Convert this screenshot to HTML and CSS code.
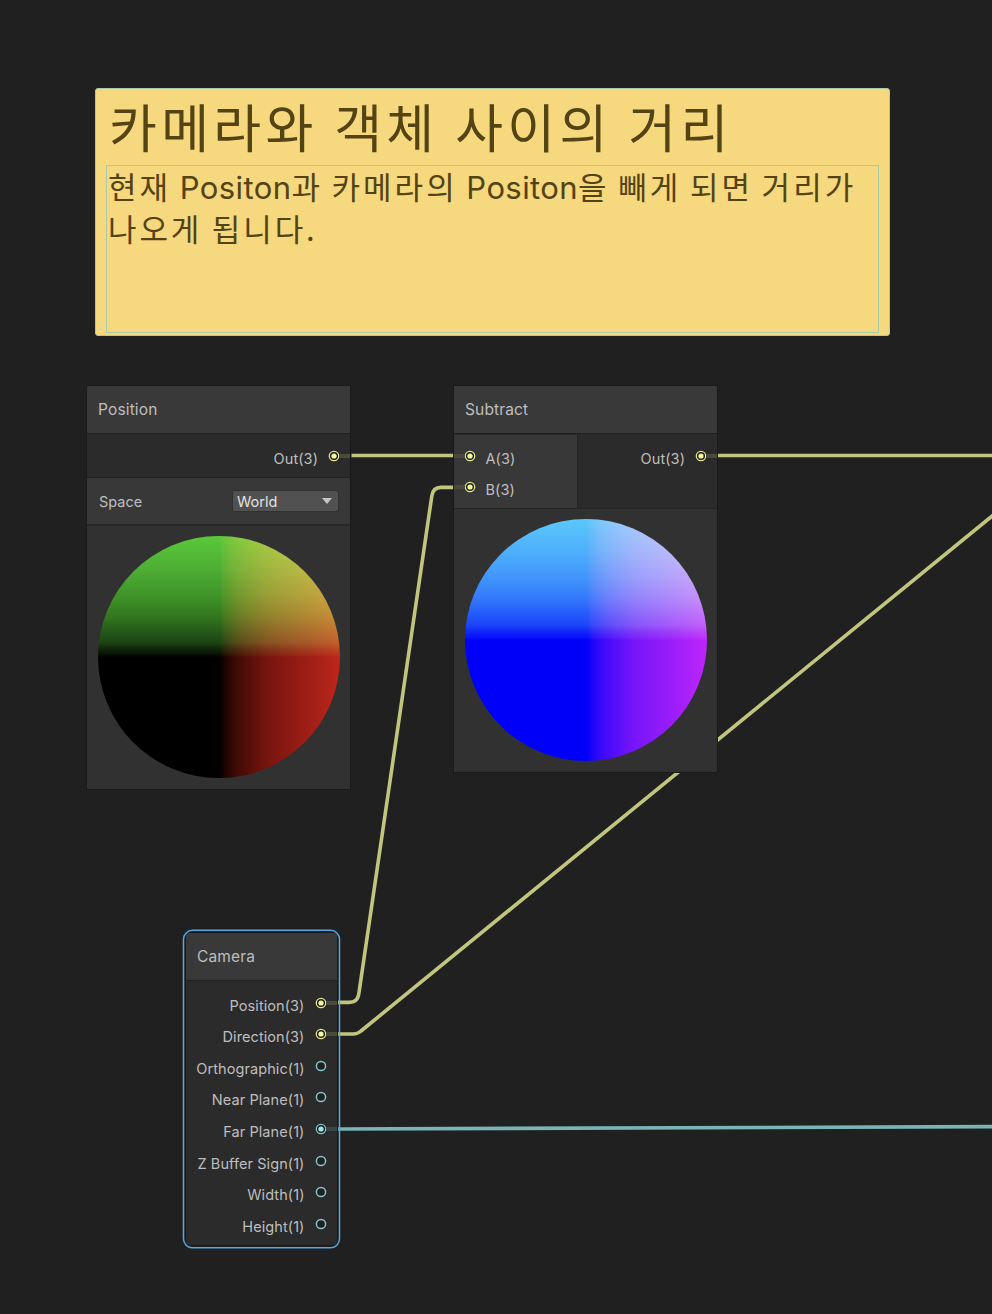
FILE: index.html
```
<!DOCTYPE html>
<html lang="ko">
<head>
<meta charset="utf-8">
<title>Shader Graph</title>
<link rel="stylesheet" href="styles.css">
</head>
<body>
<svg width="0" height="0" class="defs">
  <symbol id="ring" viewBox="0 0 12 12"><circle cx="6" cy="6" r="4.600" fill="#202020" stroke="currentColor" stroke-width="1.500"/></symbol>
  <symbol id="ring-dot" viewBox="0 0 12 12"><circle cx="6" cy="6" r="4.700" fill="#202020" stroke="currentColor" stroke-width="1.300"/><circle class="dot" cx="6" cy="6" r="2.600"/></symbol>
</svg>
<main class="canvas">
  <svg class="edges" width="992" height="1314" viewBox="0 0 992 1314">
    <g class="edge-vector">
      <path d="M351.5 455.5H453M718 455.5H992"/>
      <path d="M453 487.4H441Q433 487.4 431.8 496L358.8 994Q357.5 1002.4 349 1002.4H338"/>
      <path d="M338 1034H353Q357.500 1034 361 1031L994 514.500"/>
    </g>
    <path class="edge-float" d="M338 1129L992 1126.600"/>
  </svg>

  <section class="note">
    <h1 class="note-title">카메라와 객체 사이의 거리</h1>
    <p class="note-body"><span class="line first">현재 <span class="latin">Positon</span>과 카메라의 <span class="latin">Positon</span>을 빼게 되면 거리가</span><span class="line second">나오게 됩니다.</span></p>
  </section>

  <section class="node position">
    <h2 class="node-title">Position</h2>
    <div class="outputs"><div class="port out linked"><span>Out(3)</span><i class="pin"><svg><use href="#ring-dot"/></svg></i></div></div>
    <div class="settings"><span>Space</span><div class="select"><span>World</span><i class="arrow"></i></div></div>
    <div class="preview"><div class="sphere"></div></div>
  </section>

  <section class="node subtract">
    <h2 class="node-title">Subtract</h2>
    <div class="columns">
      <div class="inputs">
        <div class="port in linked"><i class="pin"><svg><use href="#ring-dot"/></svg></i><span>A(3)</span></div>
        <div class="port in linked"><i class="pin"><svg><use href="#ring-dot"/></svg></i><span>B(3)</span></div>
      </div>
      <div class="outputs"><div class="port out linked"><span>Out(3)</span><i class="pin"><svg><use href="#ring-dot"/></svg></i></div></div>
    </div>
    <div class="preview"><div class="sphere blue"></div></div>
  </section>

  <section class="node camera">
    <h2 class="node-title">Camera</h2>
    <div class="outputs">
      <div class="port out linked"><span>Position(3)</span><i class="pin"><svg><use href="#ring-dot"/></svg></i></div>
      <div class="port out linked"><span>Direction(3)</span><i class="pin"><svg><use href="#ring-dot"/></svg></i></div>
      <div class="port out float"><span>Orthographic(1)</span><i class="pin"><svg><use href="#ring"/></svg></i></div>
      <div class="port out float"><span>Near Plane(1)</span><i class="pin"><svg><use href="#ring"/></svg></i></div>
      <div class="port out float linked"><span>Far Plane(1)</span><i class="pin"><svg><use href="#ring-dot"/></svg></i></div>
      <div class="port out float"><span>Z Buffer Sign(1)</span><i class="pin"><svg><use href="#ring"/></svg></i></div>
      <div class="port out float"><span>Width(1)</span><i class="pin"><svg><use href="#ring"/></svg></i></div>
      <div class="port out float"><span>Height(1)</span><i class="pin"><svg><use href="#ring"/></svg></i></div>
    </div>
  </section>
  <svg class="selection" width="160" height="322" viewBox="0 0 160 322"><rect x="1.500" y="1.300" width="156" height="317.500" rx="9"/></svg>
</main>
</body>
</html>
```
FILE: styles.css
```
* { box-sizing: border-box; }
body { margin: 0; background: #202020; }
.defs { position: absolute; }
.canvas {
  position: relative;
  width: 992px;
  height: 1314px;
  overflow: hidden;
  background: #202020;
  color: #bebebe;
  font-family: Inter, "Noto Sans CJK KR", sans-serif;
  font-size: 14.5px;
}
.edges { position: absolute; left: 0; top: 0; fill: none; stroke-width: 3.6; }
.edge-vector { stroke: #c2c57e; }
.edge-float { stroke: #79b4b6; }

.note {
  position: absolute;
  left: 95px;
  top: 88px;
  width: 795px;
  height: 248px;
  padding: 1px 10px 2px;
  border: 1px solid #a9c9a8;
  border-radius: 3px;
  background: #f6d87f;
  color: #544313;
  display: flex;
  flex-direction: column;
}
.note-title {
  margin: 0;
  padding-left: 3px;
  height: 75px;
  font: 400 52px/71px "Noto Sans CJK KR", sans-serif;
  letter-spacing: 4.3px;
  word-spacing: -2.200px;
  white-space: nowrap;
}
.note-body {
  margin: 0;
  flex: 1;
  padding-left: 1px;
  border: 1px solid #a9c9a8;
  font: 400 31px/39px "Noto Sans CJK KR", sans-serif;
  letter-spacing: 2.9px;
  word-spacing: -2px;
  white-space: nowrap;
}
.line { display: block; height: 42px; }
.first { letter-spacing: 3px; word-spacing: -3px; }
.latin { font-family: Inter, sans-serif; font-size: 31px; letter-spacing: .4px; }

.node {
  background: #2b2b2b;
  box-shadow: 0 0 0 1px #1a1a1a;
  display: flex;
  flex-direction: column;
}
.position { position: absolute; left: 87px; top: 386px; width: 263px; height: 403px; }
.subtract { position: absolute; left: 454px; top: 386px; width: 263px; height: 386px; }
.node-title {
  margin: 0;
  height: 48px;
  padding: 0 11px;
  border-bottom: 1px solid #212121;
  background: #393939;
  font-size: 15.5px;
  font-weight: 400;
  line-height: 47px;
  letter-spacing: .15px;
}
.outputs { padding-top: 6px; }
.position .outputs { height: 44px; border-bottom: 1px solid #202020; }
.port { display: flex; align-items: center; height: 31.57px; letter-spacing: .08px; }
.port span { padding-top: 5px; }
.out { justify-content: flex-end; gap: 10px; padding-right: 10px; }
.in { gap: 10px; padding-left: 9.5px; }
.pin { --dot: #f5f89d; position: relative; width: 12px; height: 12px; color: #e3e68d; }
.pin svg { display: block; width: 12px; height: 12px; }
.dot { fill: var(--dot); }
.float .pin { --dot: #9be9ee; color: #84c5c9; }
.linked .pin::after {
  content: "";
  position: absolute;
  top: 4px;
  width: 11px;
  height: 4px;
  background: #4a4b39;
}
.out .pin::after { left: 11px; }
.in .pin::after { right: 11px; }
.float .pin::after { background: #384646; }

.settings {
  height: 48px;
  padding: 0 11px 0 12px;
  border-bottom: 2px solid #282828;
  background: #383838;
  display: flex;
  align-items: center;
  justify-content: space-between;
}
.select {
  width: 107px;
  height: 22px;
  padding: 0 6px 0 4px;
  border: 1px solid #303030;
  border-radius: 3px;
  background: #515151;
  color: #e2e2e2;
  display: flex;
  align-items: center;
  justify-content: space-between;
}
.arrow { border: 5px solid transparent; border-top: 6px solid #c4c4c4; border-bottom: 0; }
.preview { height: 263px; padding: 10px 11px; background: #313131; }
.sphere {
  --base: #000;
  width: 241.500px;
  height: 242px;
  border-radius: 50%;
  background-color: var(--base);
  background-image:
    linear-gradient(to top, #000 50%, #071204 51%, #11260b 53.500%, #1c4413 56%, #235719 60%, #33781f 67%, #409329 75%, #4dae33 86%, #5ac83a 100%),
    linear-gradient(to right, #000 50.300%, #180301 52%, #2c0704 54.500%, #430b07 58%, #5a0f0a 63%, #77150f 70%, #8c1a13 79%, #a31f17 89%, #be261b 100%);
  background-blend-mode: screen;
}
.blue { --base: #0000fa; }

.columns { display: flex; height: 75px; border-bottom: 1px solid #252525; }
.inputs { width: 124px; padding-top: 6px; border-top: 1px solid #292929; border-right: 1px solid #222; background: #383838; }
.columns .outputs { flex: 1; }
.inputs .port:first-child { margin-top: -1px; }

.camera { position: absolute; left: 186px; top: 933px; width: 150.500px; height: 312px; border-radius: 3px; overflow: hidden; }
.selection { position: absolute; left: 182px; top: 929px; fill: none; stroke: #56a7e6; stroke-width: 1.500; }
```
